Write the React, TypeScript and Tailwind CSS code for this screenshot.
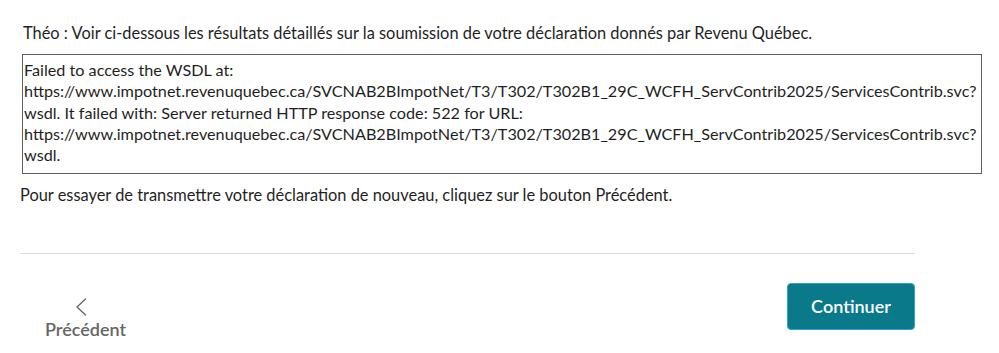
export default function App() {
  return (
    <div className="min-h-screen bg-white text-[#1f1f1f] font-[family-name:Lato,'Noto_Sans',sans-serif]">
      <div className="w-[895px] ml-5 pt-[21px]">
        <p className="ml-[3px] text-[16.4px] leading-6">
          Théo : Voir ci-dessous les résultats détaillés sur la soumission de votre déclaration donnés par Revenu Québec.
        </p>
        <div className="mt-[9px] ml-[2px] w-[960px] border border-[#5f5f5f] px-[1px] pt-[4px] pb-[8px] text-[16.2px] leading-[21.3px] whitespace-nowrap">
          Failed to access the WSDL at:
          <br />
          https://www.impotnet.revenuquebec.ca/SVCNAB2BImpotNet/T3/T302/T302B1_29C_WCFH_ServContrib2025/ServicesContrib.svc?
          <br />
          wsdl. It failed with: Server returned HTTP response code: 522 for URL:
          <br />
          https://www.impotnet.revenuquebec.ca/SVCNAB2BImpotNet/T3/T302/T302B1_29C_WCFH_ServContrib2025/ServicesContrib.svc?
          <br />
          wsdl.
        </div>
        <p className="mt-[9px] text-[16.4px] leading-6">
          Pour essayer de transmettre votre déclaration de nouveau, cliquez sur le bouton Précédent.
        </p>
        <div className="mt-[46px] border-t border-[#dcdce0]" />
        <div className="flex items-start justify-between pt-[29px]">
          <button className="ml-[25px] mt-[15px] flex flex-col items-center text-[#666666]">
            <svg className="mr-[10px]" width="12" height="18" viewBox="0 0 12 18" fill="none" stroke="currentColor" strokeWidth={1.3} strokeLinecap="round" strokeLinejoin="round">
              <path d="M10.5 1 L2 9 L10.5 17" />
            </svg>
            <span className="mt-[1px] text-[18px] font-semibold leading-6">Précédent</span>
          </button>
          <button className="h-[47px] w-[128px] rounded-[4px] border border-[#2aa3d0] bg-[#0a7a8a] text-[18px] font-semibold text-white">
            Continuer
          </button>
        </div>
      </div>
    </div>
  )
}
